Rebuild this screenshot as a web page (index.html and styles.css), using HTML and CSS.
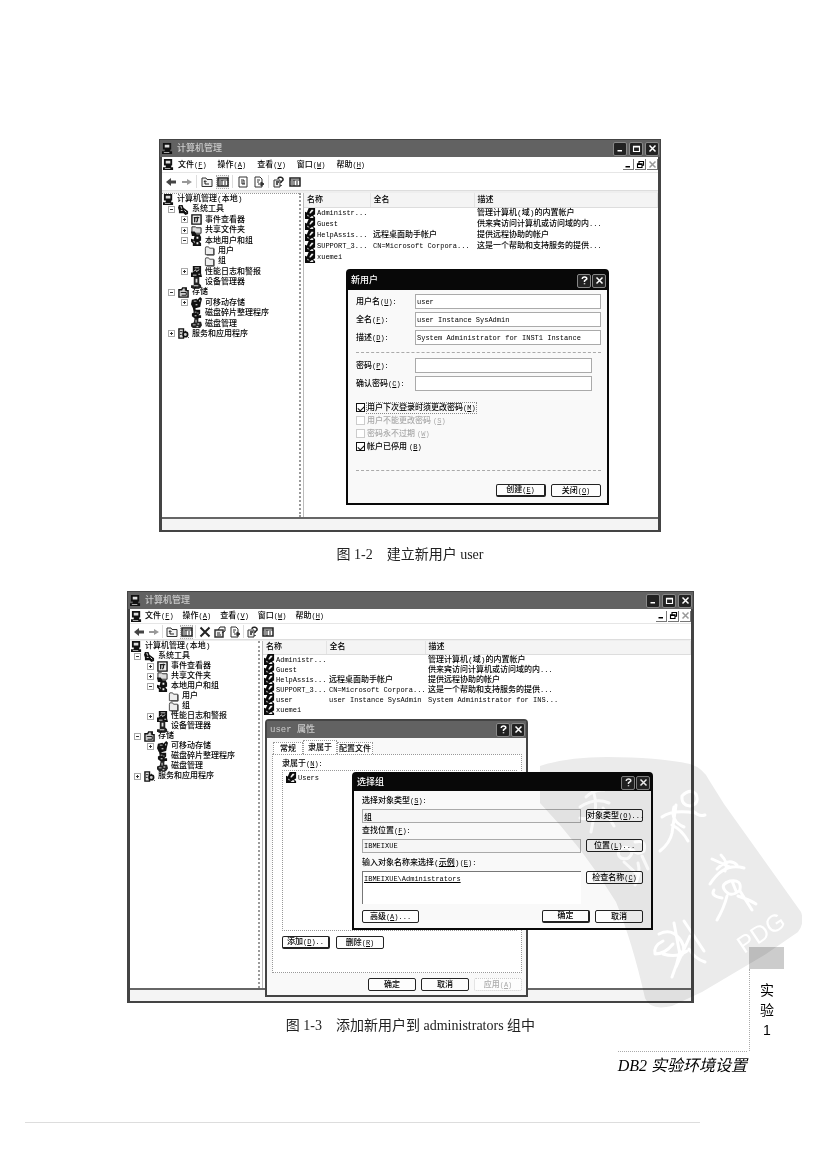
FILE: index.html
```html
<!DOCTYPE html>
<html lang="zh-CN">
<head>
<meta charset="utf-8">
<title>DB2 实验环境设置</title>
<link rel="stylesheet" href="styles.css">
</head>
<body>
<svg class="defs" aria-hidden="true">
  <symbol id="computer" viewBox="0 0 12 12"><path fill="#111" d="M1 0h9v7H1zM0 9h11v3H0zM3 7h6v2H3z"/><path fill="#ddd" d="M3 2h5v3H3zM2 10h6v1H2z"/></symbol>
  <symbol id="tools" viewBox="0 0 12 12"><path fill="#111" d="M1 1h4l1 3 5 4v3l-3 1-2-2H1V7L0 4z"/><path stroke="#eee" d="M3 2l1 3M3 7h2M7 7l2 2" fill="none"/></symbol>
  <symbol id="event" viewBox="0 0 12 12"><path fill="#eee" stroke="#111" stroke-width="1.5" d="M1 1h10v10H1z"/><path stroke="#222" stroke-width="1.5" fill="none" d="M3 4h6M4 4v5M7 3v4l-1 2"/></symbol>
  <symbol id="share" viewBox="0 0 12 12"><path fill="#ddd" stroke="#222" d="M1 2h4l1 1h5v6H1z"/><path fill="#111" d="M0 7h4l2 3h4v2H1z"/></symbol>
  <symbol id="users" viewBox="0 0 12 12"><path fill="#111" d="M4 0h5l2 2v4l-2 1 2 2v3H2V9L0 7V4l3 1z"/><path fill="#eee" d="M6 2h2v2H6zM2 6l2 1v2zM6 8h2v2H6z"/></symbol>
  <symbol id="folder" viewBox="0 0 12 12"><path fill="#eee" stroke="#444" d="M1.500 3.500V10.500H10.500V3.500H6L5 2H2z"/><path stroke="#333" fill="none" d="M11 4v7H3"/></symbol>
  <symbol id="perf" viewBox="0 0 12 12"><path fill="#111" d="M2 0h9v8l1 4H0V7h2z"/><path stroke="#ddd" fill="none" d="M4 2h5M3 6l2-2 1 2 3-2M2 10h4M8 9h2"/></symbol>
  <symbol id="device" viewBox="0 0 12 12"><path fill="#222" d="M3 0h6v7l2 2v3H0V9h3z"/><path fill="#ddd" d="M5 2h2v4H5zM3 9h5v1H3z"/></symbol>
  <symbol id="storage" viewBox="0 0 12 12"><path fill="#ccc" stroke="#111" stroke-width="1.500" d="M1 3h3l1-2h4v3h2v7H1z"/><path stroke="#111" d="M3 6h6v3H4M8 1v3" fill="none"/></symbol>
  <symbol id="removable" viewBox="0 0 12 12"><path fill="#111" d="M1 3l5-1 1 1 3-3 2 2-1 4-1 5-4 1H2L0 8z"/><path fill="#eee" d="M3 4h3v1H3zM5 8h2v1H5zM9 3h1v2H9z"/></symbol>
  <symbol id="defrag" viewBox="0 0 12 12"><path fill="#111" d="M2 0h3v2h5v4L8 8h3v3H8v1H5L1 9V6l2-1z"/><path fill="#ddd" d="M4 4h2v1H4zM7 5h1v1H7zM4 8h2v1H4z"/></symbol>
  <symbol id="disk" viewBox="0 0 12 12"><path fill="#222" d="M4 0h4v4h3l1 4-2 3H2L0 9V6l3-1z"/><path fill="#eee" d="M5 2h1v3H5zM2 7h3v1H2zM7 6h2v1H7zM6 9h2v1H6z"/></symbol>
  <symbol id="service" viewBox="0 0 12 12"><path fill="#ddd" stroke="#111" stroke-width="1.500" d="M1 1h5v10H1z"/><circle cx="8" cy="7" r="2.500" fill="#ccc" stroke="#111" stroke-width="1.800"/><path stroke="#111" d="M2 4h3M2 7h2M8 3v2M11 10l1 1"/></symbol>
  <symbol id="user" viewBox="0 0 12 12"><path fill="#0a0a0a" d="M4 0h7v7l-2 1 2 2v2H0V4l2 1z"/><path fill="#eee" d="M7 2h2v1L6 6H5V5zM2 7l3 2H3zM7 9h2v2H5z"/></symbol>
  <symbol id="back" viewBox="0 0 12 12"><path d="M6 2L1 6l5 4V7.500h5v-3H6z" fill="#444"/></symbol>
  <symbol id="fwd" viewBox="0 0 12 12"><path d="M6 3l5 3-5 3V7H1V5h5z" fill="#999"/></symbol>
  <symbol id="up" viewBox="0 0 12 12"><path d="M1 10.500V2h4l1 1.500h5v7z" fill="#f4f4f4" stroke="#333"/><path d="M4 5v3h4M3 6l1-1.500L5.500 6" fill="none" stroke="#222"/></symbol>
  <symbol id="pane" viewBox="0 0 12 12"><path d="M1 2h10v8H1z" fill="#fff" stroke="#222" stroke-width="1.500"/><path d="M1 4h10M5 4v6M8 5v4M3 5v4" stroke="#222"/></symbol>
  <symbol id="refresh" viewBox="0 0 12 12"><path d="M2 1h8v10H2z" fill="#fff" stroke="#333"/><path d="M4 4h3v4M8 8H5V5" fill="none" stroke="#222"/></symbol>
  <symbol id="export" viewBox="0 0 12 12"><path d="M2 1h5l2 2v8H2z" fill="#fff" stroke="#333"/><path d="M4 4h3M4 6h2M5 8h5M8 6l3 2-3 2z" fill="#333" stroke="#333"/></symbol>
  <symbol id="help" viewBox="0 0 12 12"><path d="M1 4h6v7H1z" fill="#eee" stroke="#333"/><path d="M3 6h3M3 8h2M5 3c0-3 6-2 5 1L8 6v1M8 9v1" fill="none" stroke="#222" stroke-width="1.500"/></symbol>
  <symbol id="props" viewBox="0 0 12 12"><path d="M1 4h8v7H1z" fill="#eee" stroke="#333" stroke-width="1.500"/><path d="M4 4l2-3h5v4L8 7M3 7h3M3 9h4" fill="none" stroke="#222"/></symbol>
  <symbol id="delete" viewBox="0 0 12 12"><path d="M1.500 1.500l9 9M10.500 1.500l-9 9" stroke="#222" stroke-width="2"/></symbol>
  <symbol id="w-min" viewBox="0 0 12 12"><path d="M2 9h6" stroke="currentColor" stroke-width="2"/></symbol>
  <symbol id="w-max" viewBox="0 0 12 12"><path d="M2 3h8v7H2zM2 4h8" fill="none" stroke="currentColor" stroke-width="1.500"/></symbol>
  <symbol id="w-res" viewBox="0 0 12 12"><path d="M4 5V2h6v5H8M2 5h6v5H2zM2 6h6" fill="none" stroke="currentColor" stroke-width="1.500"/></symbol>
  <symbol id="w-close" viewBox="0 0 12 12"><path d="M2 2l8 8M10 2l-8 8" stroke="currentColor" stroke-width="2"/></symbol>
  <symbol id="w-help" viewBox="0 0 12 12"><path d="M3 4c0-4 7-3 6 0L6 6.500V8M6 9.500V11" fill="none" stroke="currentColor" stroke-width="2"/></symbol>
</svg>

<main class="page">
  <figure class="figure figure-first">
    <section class="window" aria-label="计算机管理">
      <header class="titlebar">
        <svg class="icon"><use href="#computer"/></svg><h2>计算机管理</h2>
        <button class="wbtn" aria-label="最小化"><svg><use href="#w-min"/></svg></button>
        <button class="wbtn" aria-label="最大化"><svg><use href="#w-max"/></svg></button>
        <button class="wbtn" aria-label="关闭"><svg><use href="#w-close"/></svg></button>
      </header>
      <nav class="menubar">
        <svg class="icon"><use href="#computer"/></svg>
        <button>文件<span class="l">(<u>F</u>)</span></button><button>操作<span class="l">(<u>A</u>)</span></button><button>查看<span class="l">(<u>V</u>)</span></button><button>窗口<span class="l">(<u>W</u>)</span></button><button>帮助<span class="l">(<u>H</u>)</span></button>
        <span class="mdi"><button aria-label="最小化子窗口"><svg><use href="#w-min"/></svg></button><button aria-label="还原子窗口"><svg><use href="#w-res"/></svg></button><button class="dim" aria-label="关闭子窗口"><svg><use href="#w-close"/></svg></button></span>
      </nav>
      <div class="toolbar">
        <button aria-label="后退"><svg><use href="#back"/></svg></button><button aria-label="前进"><svg><use href="#fwd"/></svg></button><i></i>
        <button aria-label="向上"><svg><use href="#up"/></svg></button><button class="on" aria-label="显示树"><svg><use href="#pane"/></svg></button><i></i>
        <button aria-label="刷新"><svg><use href="#refresh"/></svg></button><button aria-label="导出"><svg><use href="#export"/></svg></button><i></i>
        <button aria-label="帮助"><svg><use href="#help"/></svg></button><button aria-label="窗格"><svg><use href="#pane"/></svg></button>
      </div>
      <div class="panes">
        <ul class="tree tree-tall">
          <li class="d0"><svg class="icon"><use href="#computer"/></svg>计算机管理(本地)</li>
          <li class="d1"><b class="box minus"></b><svg class="icon"><use href="#tools"/></svg>系统工具</li>
          <li class="d2"><b class="box plus"></b><svg class="icon"><use href="#event"/></svg>事件查看器</li>
          <li class="d2"><b class="box plus"></b><svg class="icon"><use href="#share"/></svg>共享文件夹</li>
          <li class="d2"><b class="box minus"></b><svg class="icon"><use href="#users"/></svg>本地用户和组</li>
          <li class="d3"><svg class="icon"><use href="#folder"/></svg>用户</li>
          <li class="d3"><svg class="icon"><use href="#folder"/></svg>组</li>
          <li class="d2"><b class="box plus"></b><svg class="icon"><use href="#perf"/></svg>性能日志和警报</li>
          <li class="d2"><b class="box"></b><svg class="icon"><use href="#device"/></svg>设备管理器</li>
          <li class="d1"><b class="box minus"></b><svg class="icon"><use href="#storage"/></svg>存储</li>
          <li class="d2"><b class="box plus"></b><svg class="icon"><use href="#removable"/></svg>可移动存储</li>
          <li class="d2"><b class="box"></b><svg class="icon"><use href="#defrag"/></svg>磁盘碎片整理程序</li>
          <li class="d2"><b class="box"></b><svg class="icon"><use href="#disk"/></svg>磁盘管理</li>
          <li class="d1"><b class="box plus"></b><svg class="icon"><use href="#service"/></svg>服务和应用程序</li>
        </ul>
        <div class="list">
          <table>
            <colgroup><col class="c-name"><col class="c-full"><col></colgroup>
            <thead><tr><th>名称</th><th>全名</th><th>描述</th></tr></thead>
            <tbody>
              <tr><td><svg class="icon"><use href="#user"/></svg><span class="l">Administr...</span></td><td></td><td>管理计算机(域)的内置帐户</td></tr>
              <tr><td><svg class="icon"><use href="#user"/></svg><span class="l">Guest</span></td><td></td><td>供来宾访问计算机或访问域的内<span class="l">...</span></td></tr>
              <tr><td><svg class="icon"><use href="#user"/></svg><span class="l">HelpAssis...</span></td><td>远程桌面助手帐户</td><td>提供远程协助的帐户</td></tr>
              <tr><td><svg class="icon"><use href="#user"/></svg><span class="l">SUPPORT_3...</span></td><td><span class="l">CN=Microsoft Corpora...</span></td><td>这是一个帮助和支持服务的提供<span class="l">...</span></td></tr>
              <tr><td><svg class="icon"><use href="#user"/></svg><span class="l">xuemei</span></td><td></td><td></td></tr>
            </tbody>
          </table>
        </div>
      </div>
      <div class="status"></div>

      <form class="dialog dialog-new" aria-label="新用户">
        <header class="dtitle"><h3>新用户</h3>
          <button type="button" class="wbtn" aria-label="帮助"><svg><use href="#w-help"/></svg></button>
          <button type="button" class="wbtn" aria-label="关闭"><svg><use href="#w-close"/></svg></button>
        </header>
        <div class="dbody">
          <div class="fields">
            <label for="uname">用户名<span class="l">(<u>U</u>):</span></label><input id="uname" type="text" value="user">
            <label for="fname">全名<span class="l">(<u>F</u>):</span></label><input id="fname" type="text" value="user Instance SysAdmin">
            <label for="desc">描述<span class="l">(<u>D</u>):</span></label><input id="desc" type="text" value="System Administrator for INST1 Instance">
          </div>
          <hr>
          <div class="fields fields-pass">
            <label for="pw">密码<span class="l">(<u>P</u>):</span></label><input id="pw" type="password">
            <label for="pw2">确认密码<span class="l">(<u>C</u>):</span></label><input id="pw2" type="password">
          </div>
          <div class="checks">
            <label><input type="checkbox" checked><span class="focus">用户下次登录时须更改密码<span class="l">(<u>M</u>)</span></span></label>
            <label class="off"><input type="checkbox" disabled>用户不能更改密码<span class="l">(<u>S</u>)</span></label>
            <label class="off"><input type="checkbox" disabled>密码永不过期<span class="l">(<u>W</u>)</span></label>
            <label><input type="checkbox" checked>帐户已停用<span class="l">(<u>B</u>)</span></label>
          </div>
          <hr>
          <div class="actions"><button type="button" class="btn primary">创建<span class="l">(<u>E</u>)</span></button><button type="button" class="btn">关闭<span class="l">(<u>O</u>)</span></button></div>
        </div>
      </form>
    </section>
    <figcaption>图 1-2&emsp;建立新用户 user</figcaption>
  </figure>

  <div class="lower">
    <figure class="figure figure-second">
      <section class="window window-wide" aria-label="计算机管理">
        <header class="titlebar">
          <svg class="icon"><use href="#computer"/></svg><h2>计算机管理</h2>
          <button class="wbtn" aria-label="最小化"><svg><use href="#w-min"/></svg></button>
          <button class="wbtn" aria-label="最大化"><svg><use href="#w-max"/></svg></button>
          <button class="wbtn" aria-label="关闭"><svg><use href="#w-close"/></svg></button>
        </header>
        <nav class="menubar">
          <svg class="icon"><use href="#computer"/></svg>
          <button>文件<span class="l">(<u>F</u>)</span></button><button>操作<span class="l">(<u>A</u>)</span></button><button>查看<span class="l">(<u>V</u>)</span></button><button>窗口<span class="l">(<u>W</u>)</span></button><button>帮助<span class="l">(<u>H</u>)</span></button>
          <span class="mdi"><button aria-label="最小化子窗口"><svg><use href="#w-min"/></svg></button><button aria-label="还原子窗口"><svg><use href="#w-res"/></svg></button><button class="dim" aria-label="关闭子窗口"><svg><use href="#w-close"/></svg></button></span>
        </nav>
        <div class="toolbar">
          <button aria-label="后退"><svg><use href="#back"/></svg></button><button aria-label="前进"><svg><use href="#fwd"/></svg></button><i></i>
          <button aria-label="向上"><svg><use href="#up"/></svg></button><button class="on" aria-label="显示树"><svg><use href="#pane"/></svg></button><i></i>
          <button aria-label="删除"><svg><use href="#delete"/></svg></button><button aria-label="属性"><svg><use href="#props"/></svg></button><button aria-label="导出"><svg><use href="#export"/></svg></button><i></i>
          <button aria-label="帮助"><svg><use href="#help"/></svg></button><button aria-label="窗格"><svg><use href="#pane"/></svg></button>
        </div>
        <div class="panes">
          <ul class="tree">
            <li class="d0"><svg class="icon"><use href="#computer"/></svg>计算机管理(本地)</li>
            <li class="d1"><b class="box minus"></b><svg class="icon"><use href="#tools"/></svg>系统工具</li>
            <li class="d2"><b class="box plus"></b><svg class="icon"><use href="#event"/></svg>事件查看器</li>
            <li class="d2"><b class="box plus"></b><svg class="icon"><use href="#share"/></svg>共享文件夹</li>
            <li class="d2"><b class="box minus"></b><svg class="icon"><use href="#users"/></svg>本地用户和组</li>
            <li class="d3"><svg class="icon"><use href="#folder"/></svg>用户</li>
            <li class="d3"><svg class="icon"><use href="#folder"/></svg>组</li>
            <li class="d2"><b class="box plus"></b><svg class="icon"><use href="#perf"/></svg>性能日志和警报</li>
            <li class="d2"><b class="box"></b><svg class="icon"><use href="#device"/></svg>设备管理器</li>
            <li class="d1"><b class="box minus"></b><svg class="icon"><use href="#storage"/></svg>存储</li>
            <li class="d2"><b class="box plus"></b><svg class="icon"><use href="#removable"/></svg>可移动存储</li>
            <li class="d2"><b class="box"></b><svg class="icon"><use href="#defrag"/></svg>磁盘碎片整理程序</li>
            <li class="d2"><b class="box"></b><svg class="icon"><use href="#disk"/></svg>磁盘管理</li>
            <li class="d1"><b class="box plus"></b><svg class="icon"><use href="#service"/></svg>服务和应用程序</li>
          </ul>
          <div class="list">
            <table>
              <colgroup><col class="c-name"><col class="c-full"><col></colgroup>
              <thead><tr><th>名称</th><th>全名</th><th>描述</th></tr></thead>
              <tbody>
                <tr><td><svg class="icon"><use href="#user"/></svg><span class="l">Administr...</span></td><td></td><td>管理计算机(域)的内置帐户</td></tr>
                <tr><td><svg class="icon"><use href="#user"/></svg><span class="l">Guest</span></td><td></td><td>供来宾访问计算机或访问域的内<span class="l">...</span></td></tr>
                <tr><td><svg class="icon"><use href="#user"/></svg><span class="l">HelpAssis...</span></td><td>远程桌面助手帐户</td><td>提供远程协助的帐户</td></tr>
                <tr><td><svg class="icon"><use href="#user"/></svg><span class="l">SUPPORT_3...</span></td><td><span class="l">CN=Microsoft Corpora...</span></td><td>这是一个帮助和支持服务的提供<span class="l">...</span></td></tr>
                <tr><td><svg class="icon"><use href="#user"/></svg><span class="l">user</span></td><td><span class="l">user Instance SysAdmin</span></td><td><span class="l">System Administrator for INS...</span></td></tr>
                <tr><td><svg class="icon"><use href="#user"/></svg><span class="l">xuemei</span></td><td></td><td></td></tr>
              </tbody>
            </table>
          </div>
        </div>
        <div class="status"></div>

        <form class="dialog dialog-props" aria-label="user 属性">
          <header class="dtitle"><h3>user 属性</h3>
            <button type="button" class="wbtn" aria-label="帮助"><svg><use href="#w-help"/></svg></button>
            <button type="button" class="wbtn" aria-label="关闭"><svg><use href="#w-close"/></svg></button>
          </header>
          <div class="dbody">
            <div class="tabs"><button type="button">常规</button><button type="button" class="active">隶属于</button><button type="button">配置文件</button></div>
            <div class="tabpanel">
              <p>隶属于<span class="l">(<u>N</u>):</span></p>
              <ul class="members"><li><svg class="icon"><use href="#user"/></svg><span class="l">Users</span></li></ul>
              <div class="row"><button type="button" class="btn primary">添加<span class="l">(<u>D</u>)..</span></button><button type="button" class="btn">删除<span class="l">(<u>R</u>)</span></button></div>
            </div>
            <div class="actions"><button type="button" class="btn">确定</button><button type="button" class="btn">取消</button><button type="button" class="btn" disabled>应用<span class="l">(<u>A</u>)</span></button></div>
          </div>
        </form>

        <form class="dialog dialog-select" aria-label="选择组">
          <header class="dtitle"><h3>选择组</h3>
            <button type="button" class="wbtn" aria-label="帮助"><svg><use href="#w-help"/></svg></button>
            <button type="button" class="wbtn" aria-label="关闭"><svg><use href="#w-close"/></svg></button>
          </header>
          <div class="dbody">
            <label for="otype">选择对象类型<span class="l">(<u>S</u>):</span></label>
            <div class="pick"><input id="otype" class="zh" type="text" value="组" readonly><button type="button" class="btn">对象类型<span class="l">(<u>O</u>)...</span></button></div>
            <label for="loc">查找位置<span class="l">(<u>F</u>):</span></label>
            <div class="pick"><input id="loc" type="text" value="IBMEIXUE" readonly><button type="button" class="btn">位置<span class="l">(<u>L</u>)...</span></button></div>
            <div class="lab"><label for="names">输入对象名称来选择</label>(<a href="#names">示例</a>)<span class="l">(<u>E</u>):</span></div>
            <div class="pick"><textarea id="names" spellcheck="false">IBMEIXUE\Administrators</textarea><button type="button" class="btn">检查名称<span class="l">(<u>C</u>)</span></button></div>
            <div class="actions"><button type="button" class="btn adv">高级<span class="l">(<u>A</u>)...</span></button><button type="button" class="btn primary">确定</button><button type="button" class="btn">取消</button></div>
          </div>
        </form>
      </section>
      <figcaption>图 1-3&emsp;添加新用户到 administrators 组中</figcaption>
    </figure>
    <aside class="marker"><div class="marker-block"></div><div class="marker-text"><span>实</span><span>验</span><span>1</span></div></aside>
    <svg class="watermark" viewBox="0 0 290 260" aria-hidden="true">
      <path fill="#ebebeb" d="M28 15Q55 6 95 6Q145 6 178 13Q191 17 197 29L212 53L289 161Q293 172 286 181L254 203L190 241L160 255Q138 260 133 247Q120 190 104 151Q72 98 28 52Z"/>
      <g fill="none" stroke="#fff" stroke-width="3" stroke-linecap="round" stroke-linejoin="round">
        <path d="M170 45q8-8 14-2q4 10-6 12q-9-1-8-10M162 56q-4 14 10 20M150 66q10-8 34-4M164 54l-4 28q-2 10-12 18M160 74q10 5 16 16M181 60q6 6 12 4"/>
        <path d="M200 108l18 8M205 118q12-12 20-4M198 133q14-22 34-16M209 104q8 8 4 16M218 130q12-2 10 9q-10 9-16-1q-3-5 6-8M220 130l4 10M210 147q-12-2-8-8M226 145q12 4 18 8M215 145q-3 12-10 24M228 140l12 19"/>
        <path d="M147 183q12-6 20 4q8 10 3 17M151 190q-10 5-8 13q10 0 18-10M162 172l6 32M172 170l20 30M168 200q-3 14-8 26M177 198q6 10 16 13M151 203q14 4 24-3M178 185l-14 31"/>
        <path d="M74 46q8-8 18-7M68 56q15-10 29-4M80 39q5 7 3 24M68 67q10 3 19-8M91 57l11 18M82 65l-3 16"/>
        <path d="M108 98q9-5 12 4q-3 8-11 5q-5-4-1-9M123 91q12-3 9 9q-7 5-11-1M112 111l13 12M130 105l6 13M126 112q3 10-3 22"/>
      </g>
      <text x="0" y="0" transform="translate(232 203) rotate(-34)">PDG</text>
    </svg>
  </div>
  <footer class="running">DB2 实验环境设置</footer>
  <hr class="edge">
</main>
</body>
</html>
```
FILE: styles.css
```css
* { box-sizing: border-box; }
body { margin: 0; background: #fff; color: #000; font-family: "Liberation Mono", "Noto Sans CJK SC", monospace; font-size: 8px; font-weight: 500; line-height: 10px; }
button, input, textarea { font: inherit; color: inherit; margin: 0; padding: 0; border: 0; background: none; border-radius: 0; }
h2, h3, p, ul, figure { margin: 0; padding: 0; }
ul { list-style: none; }
.defs { display: none; }
.page { padding: 139px 0 46px; }
.l { font-size: 7px; }
.icon { width: 11px; height: 11px; flex: none; }

.figure-first { margin: 0 165px 27px 159px; }
.lower { position: relative; display: flex; padding: 0 42px 0 127px; }
.figure-second { flex: 1; min-width: 0; padding-bottom: 16px; }
figcaption { margin-top: 14px; text-align: center; font-family: "Liberation Serif", "Noto Sans CJK SC", serif; font-weight: 400; font-size: 14px; line-height: 18px; color: #222; }

.window { position: relative; display: flex; flex-direction: column; border: 2px solid #444; border-width: 1px 3px 2px; background: #fff; }
.titlebar { display: flex; align-items: center; gap: 2px; height: 17px; padding: 0 1px 0 2px; margin: 0 -2px; background: #626262; color: #ccc; }
.titlebar h2, .dtitle h3 { flex: 1; font-size: 9px; font-weight: 500; line-height: 12px; padding-left: 2px; }
.wbtn { width: 14px; height: 14px; display: grid; place-items: center; background: #222; border: 1px solid #888; border-radius: 2px; color: #fff; }
.wbtn svg { width: 9px; height: 9px; }
.menubar { display: flex; align-items: center; height: 16px; padding-left: 1px; border-bottom: 1px solid #e6e6e6; }
.menubar > button { margin-left: 4px; margin-right: 7px; white-space: nowrap; }
.mdi { display: flex; gap: 1px; margin-left: auto; }
.mdi button { width: 11px; height: 11px; border: 1px solid #777; border-width: 0 1px 1px 0; display: grid; place-items: center; }
.mdi svg { width: 9px; height: 9px; }
.dim { color: #999; }
.toolbar { display: flex; align-items: center; gap: 3px; height: 18px; border-bottom: 1px solid #ddd; padding-left: 2px; }
.toolbar button { width: 13px; height: 14px; display: grid; place-items: center; }
.toolbar button svg { width: 12px; height: 12px; }
.toolbar .on { border: 1px dotted #aaa; background: #f2f2f2; }
.toolbar i { width: 1px; height: 13px; background: #ddd; }
.panes { display: flex; min-height: 326px; border-top: 2px solid #eee; }
.window-wide .panes { min-height: 348px; border-top-width: 1px; }
.window-wide .menubar { height: 15px; }
.window-wide .menubar > button { margin-left: 3px; margin-right: 6px; }
.window-wide .toolbar { height: 16px; gap: 2px; }
.status { height: 13px; border-top: 2px solid #666; background: #f4f4f4; }

.tree { width: 139px; flex: none; border: 1px dotted #999; border-width: 1px 2px 0 0; padding-left: 1px; }
.tree-tall { display: flex; flex-direction: column; justify-content: space-between; padding-bottom: 178px; }
.window-wide .tree { width: 130px; border-top: 0; }
.tree li { display: flex; align-items: center; gap: 3px; height: 10px; white-space: nowrap; }
.d1 { padding-left: 3px; }
.d2 { padding-left: 16px; }
.d3 { padding-left: 37px; }
.tree-tall .d1 { padding-left: 5px; }
.tree-tall .d2 { padding-left: 18px; }
.tree-tall .d3 { padding-left: 41px; }
.box { flex: none; width: 7px; height: 7px; }
.minus, .plus { border: 1px solid #aaa; background: linear-gradient(#333, #333) center / 3px 1px no-repeat; }
.plus { background: linear-gradient(#333, #333) center / 3px 1px no-repeat, linear-gradient(#333, #333) center / 1px 3px no-repeat; }
.list { flex: 1; min-width: 0; margin-left: 2px; border-left: 1px solid #bbb; }
table { width: 100%; table-layout: fixed; border-collapse: collapse; }
.c-name { width: 66px; }
.c-full { width: 104px; }
.window-wide .c-name { width: 63px; }
.window-wide .c-full { width: 99px; }
th { height: 14px; padding: 0 0 0 3px; text-align: left; font-weight: 500; background: #f4f4f4; border-bottom: 1px solid #ddd; border-right: 1px solid #e4e4e4; }
td { height: 11px; padding: 0 0 0 3px; white-space: nowrap; line-height: 10px; }
.window-wide th { height: 13px; }
.window-wide td { height: 10px; }
td:first-child { display: flex; align-items: center; gap: 1px; padding-left: 1px; }

.dialog { position: absolute; background: #f9f9f9; border: 2px solid #080808; border-radius: 4px 4px 0 0; }
.dtitle { display: flex; align-items: center; gap: 1px; height: 19px; padding: 0 1px; background: #080808; color: #fff; }
.dbody { display: flex; flex-direction: column; }
.dialog input[type="text"], .dialog input[type="password"], .dialog textarea { min-width: 0; height: 15px; padding: 0 1px; border: 1px solid #aaa; font-size: 7px; background: #fff; }
.dialog hr { width: 100%; margin: 0; border: 0; border-top: 1px dashed #aaa; }
.btn { height: 13px; min-width: 48px; border: 1px solid #222; border-radius: 2px; background: #fdfdfd; line-height: 10px; white-space: nowrap; }
.btn:disabled { color: #aaa; border: 1px dotted #ccc; }
.primary { border-width: 1px 2px 2px 1px; }
.actions { display: flex; justify-content: flex-end; gap: 5px; }
.row { display: flex; gap: 6px; }

.dialog-new { left: 184px; top: 129px; width: 263px; }
.dialog-new .dbody { padding: 4px 6px 6px 8px; }
.fields { display: grid; grid-template-columns: 59px 1fr; gap: 3px 0; align-items: center; margin-bottom: 7px; }
.fields-pass { margin: 5px 9px 10px 0; }
.checks { display: flex; flex-direction: column; margin-bottom: 17px; }
.checks label { display: flex; align-items: center; gap: 2px; height: 13px; }
.checks input { appearance: none; width: 9px; height: 9px; border: 1px solid #111; background: #fff; display: grid; place-items: center; }
.checks input:checked::before { content: ""; width: 5px; height: 3px; border: 1px solid #111; border-width: 0 0 1px 1px; transform: rotate(-45deg); }
.checks input:disabled { border-color: #ccc; }
.focus { outline: 1px dotted #888; }
.off { color: #aaa; }
.dialog-new .actions { margin-top: 13px; }
.dialog-new .btn { min-width: 50px; }

.dialog-props { left: 135px; top: 127px; width: 263px; border-color: #444; }
.dialog-props .dtitle { height: 17px; background: #626262; color: #ccc; }
.dialog-props .dbody { padding: 2px 4px 4px 5px; }
.tabs { display: flex; align-items: flex-end; padding-left: 1px; }
.tabs button { height: 12px; padding: 0 6px; border: 1px dotted #999; border-bottom: 0; background: #fff; }
.tabs .active { height: 14px; padding: 0 4px; }
.tabs button:last-child { padding: 0 1px; }
.tabpanel { border: 1px dotted #999; background: #fff; padding: 4px 4px 23px 9px; }
.members { height: 161px; border: 1px dotted #999; padding: 1px 3px; margin: 1px 0 5px; }
.members li { display: flex; align-items: center; gap: 1px; }
.dialog-props .actions { margin-top: 5px; }

.dialog-select { left: 222px; top: 180px; width: 301px; }
.dialog-select .dtitle { height: 17px; }
.dialog-select .dbody { padding: 5px 8px 5px 8px; }
.pick { display: grid; grid-template-columns: 1fr 57px; column-gap: 5px; align-items: center; margin: 3px 0; }
.dialog-select .pick input { height: 14px; background: #f6f6f6; }
.dialog-select .pick .zh { font-size: 8px; }
.dialog-select textarea { height: 33px; resize: none; text-decoration: underline; border-color: #777; border-right: 0; border-bottom: 0; padding: 2px 1px; display: block; overflow: hidden; }
.pick .btn { align-self: start; }
.lab { margin-top: 2px; }
.lab a { color: inherit; }
.dialog-select .actions { margin-top: 3px; }
.adv { margin-right: auto; min-width: 57px; }

.marker { width: 35px; margin-left: 55px; align-self: flex-end; }
.marker-block { height: 22px; background: #ccc; }
.marker-text { display: flex; flex-direction: column; align-items: center; padding: 11px 0; border-left: 1px dotted #aaa; font-family: "Liberation Sans", "Noto Sans CJK SC", sans-serif; font-size: 14px; font-weight: 400; line-height: 20px; }
.watermark { position: absolute; right: 24px; top: 160px; width: 290px; height: 260px; mix-blend-mode: multiply; pointer-events: none; }
.watermark text { fill: #fff; font-family: "Liberation Sans", sans-serif; font-size: 24px; }
.running { width: max-content; margin: 0 79px 0 auto; padding-top: 4px; border-top: 1px dotted #aaa; font-family: "Liberation Serif", "Noto Sans CJK SC", serif; font-style: italic; font-size: 16px; font-weight: 400; line-height: 20px; }
.edge { margin: 46px 126px 0 25px; border: 0; border-top: 1px solid #ddd; }
```
